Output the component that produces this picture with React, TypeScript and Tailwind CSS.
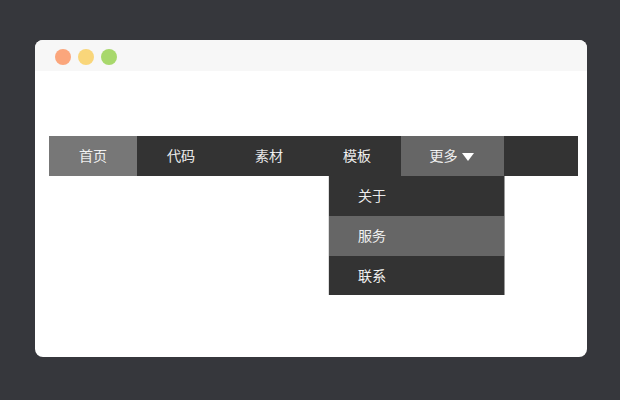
import { ReactNode } from 'react'

const font = '[font-family:"Noto_Sans_CJK_SC","Liberation_Sans",sans-serif]'

function NavItem({ children, className = 'bg-[#333333]', width = 'w-[88px]' }: { children: ReactNode; className?: string; width?: string }) {
  return <div className={`${width} ${className} flex h-10 items-center justify-center gap-1 pb-[2px] text-sm font-light text-white [-webkit-text-stroke:0.2px_white]`}>{children}</div>
}

function MenuRow({ label, active }: { label: string; active?: boolean }) {
  return <div className={`flex h-10 items-center pb-[2px] pl-[29px] text-sm font-light text-white [-webkit-text-stroke:0.2px_white] ${active ? 'bg-[#666666]' : 'bg-[#333333]'}`}>{label}</div>
}

export default function App() {
  return (
    <div className={`h-[400px] w-[620px] overflow-hidden bg-[#36373c] pl-[35px] pt-10 ${font}`}>
      <div className="h-[317px] w-[552px] overflow-hidden rounded-lg bg-white">
        <div className="flex h-[31px] items-center gap-[7px] bg-[#f7f7f7] pl-5 pt-[2px]">
          <span className="size-4 rounded-full bg-[#fba67c]" />
          <span className="size-4 rounded-full bg-[#f9d67a]" />
          <span className="size-4 rounded-full bg-[#a8d86c]" />
        </div>

        <div className="relative ml-[14px] mt-[65px] flex w-[529px] bg-[#333333]">
          <NavItem className="bg-[#777777]">首页</NavItem>
          <NavItem>代码</NavItem>
          <NavItem>素材</NavItem>
          <NavItem>模板</NavItem>
          <NavItem className="bg-[#666666] pr-[2px]" width="w-[103px]">
            更多
            <svg width="12" height="8" viewBox="0 0 12 8" className="mt-[3px]">
              <path d="M0 0h12L6 8z" fill="#fff" />
            </svg>
          </NavItem>

          <div className="absolute left-[280px] top-10 h-[119px] w-[175px] overflow-hidden shadow-[1px_0_0_#999999,-1px_0_0_#dddddd]">
            <MenuRow label="关于" />
            <MenuRow label="服务" active />
            <MenuRow label="联系" />
          </div>
        </div>
      </div>
    </div>
  )
}
